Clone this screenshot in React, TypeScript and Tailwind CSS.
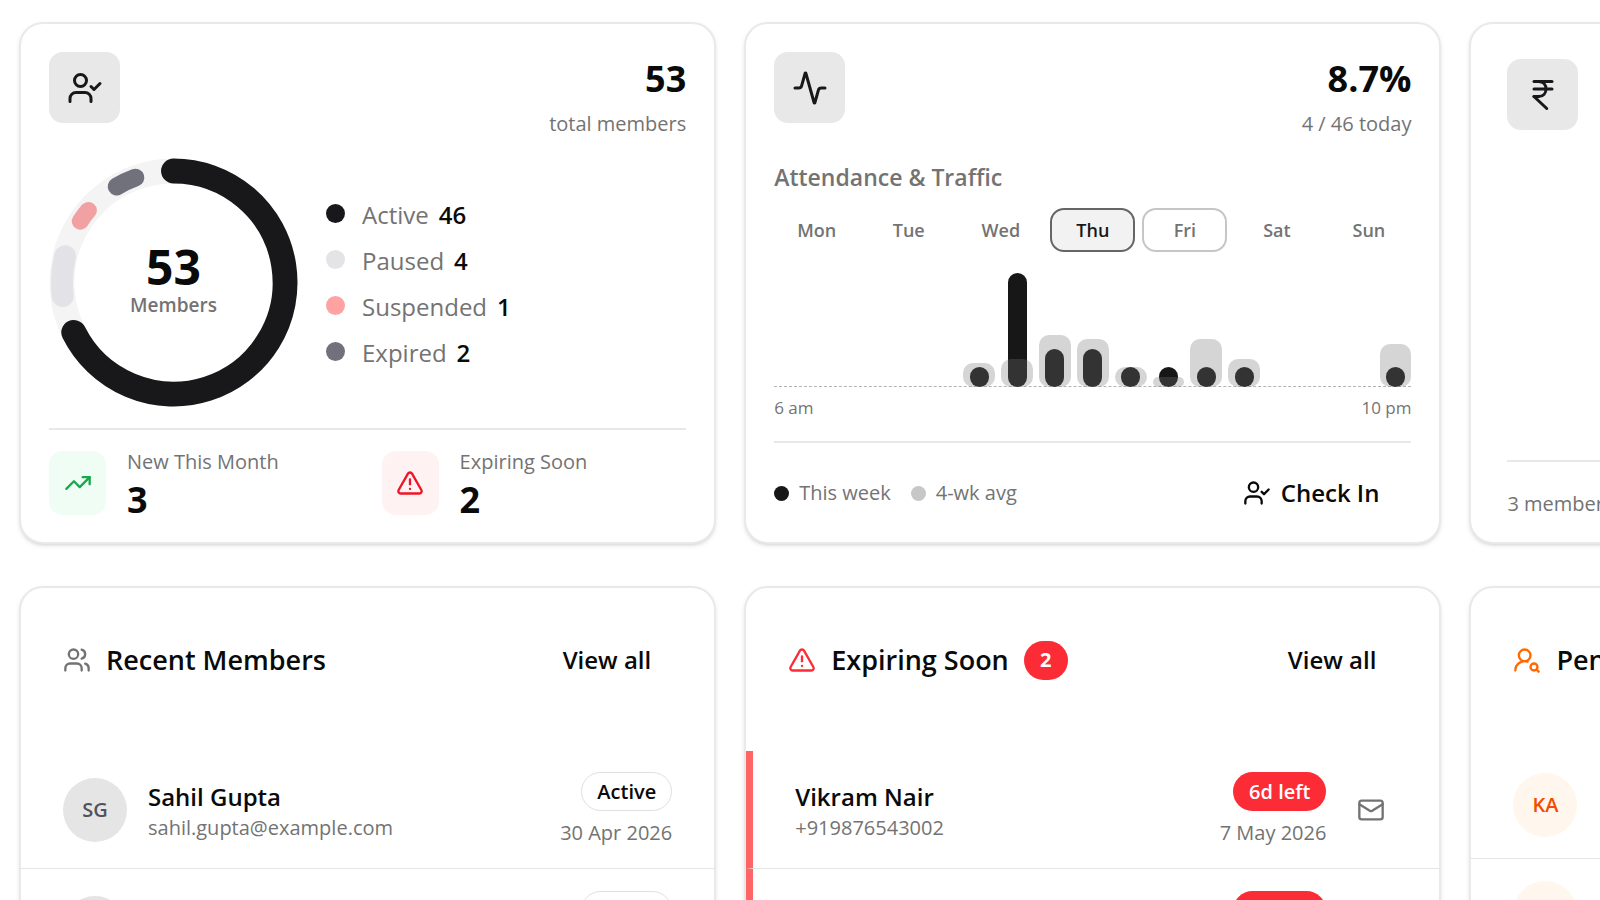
import React, { useState } from "react";
import {
  Activity,
  IndianRupee,
  Mail,
  TrendingUp,
  TriangleAlert,
  UserCheck,
  UserRoundSearch,
  Users,
} from "lucide-react";

const days = ["Mon", "Tue", "Wed", "Thu", "Fri", "Sat", "Sun"];

// one entry per hour, 6 am to 10 pm, heights as a share of the busiest hour
const hours = [
  { now: 0, avg: 0 },
  { now: 0, avg: 0 },
  { now: 0, avg: 0 },
  { now: 0, avg: 0 },
  { now: 0, avg: 0 },
  { now: 17.5, avg: 21 },
  { now: 100, avg: 25 },
  { now: 33, avg: 46 },
  { now: 33, avg: 42 },
  { now: 17.5, avg: 17.5 },
  { now: 17.5, avg: 9 },
  { now: 17.5, avg: 42 },
  { now: 17.5, avg: 25 },
  { now: 0, avg: 0 },
  { now: 0, avg: 0 },
  { now: 0, avg: 0 },
  { now: 17.5, avg: 37.5 },
];

const statuses = [
  { label: "Active", count: 46, dot: "bg-[#18181b]" },
  { label: "Paused", count: 4, dot: "bg-[#e4e4e7]" },
  { label: "Suspended", count: 1, dot: "bg-[#ffa2a2]" },
  { label: "Expired", count: 2, dot: "bg-[#71717b]" },
];

const segments = [
  { from: 0, to: 243.4, width: 25, color: "#18181b" },
  { from: 263, to: 283.6, width: 22, color: "#e2e2e7" },
  { from: 303.3, to: 310.3, width: 17, color: "#f2a1a3" },
  { from: 329.4, to: 340, width: 18, color: "#71717b" },
];

function arc(from: number, to: number) {
  const r = 112;
  const point = (deg: number) => {
    const a = ((deg - 90) * Math.PI) / 180;
    return `${125 + r * Math.cos(a)} ${125 + r * Math.sin(a)}`;
  };
  return `M${point(from)} A${r} ${r} 0 ${to - from > 180 ? 1 : 0} 1 ${point(to)}`;
}

function Card({ className, children }: { className: string; children: React.ReactNode }) {
  return (
    <section
      className={`flex flex-col rounded-3xl border-2 border-[#e9e9e9] bg-white shadow-[0_2px_5px_rgba(0,0,0,0.08),0_2px_3px_-1px_rgba(0,0,0,0.1)] ${className}`}
    >
      {children}
    </section>
  );
}

function IconTile({ children }: { children: React.ReactNode }) {
  return (
    <div className="flex size-[71px] shrink-0 items-center justify-center rounded-[14px] bg-[#e8e8e8] text-[#18181b]">
      {children}
    </div>
  );
}

function StatHeader({ icon, value, note }: { icon: React.ReactNode; value: string; note: string }) {
  return (
    <div className="flex items-start justify-between">
      <IconTile>{icon}</IconTile>
      <div className="text-right">
        <p className="text-[36px] leading-[53px] font-bold">{value}</p>
        <p className="text-[20px] leading-[38px] text-[#737373]">{note}</p>
      </div>
    </div>
  );
}

function MembersCard() {
  return (
    <Card className="px-7 pt-7 pb-[15px]">
      <StatHeader icon={<UserCheck size={36} />} value="53" note="total members" />

      <div className="mt-[15px] flex items-center gap-7">
        <div className="grid size-[249px] shrink-0 place-items-center">
          <svg viewBox="0 0 250 250" className="col-start-1 row-start-1 size-full" fill="none">
            <circle cx="125" cy="125" r="112" stroke="#f4f4f4" strokeWidth="25" />
            {segments.map((s) => (
              <path
                key={s.from}
                d={arc(s.from, s.to)}
                stroke={s.color}
                strokeWidth={s.width}
                strokeLinecap="round"
              />
            ))}
          </svg>
          <div className="col-start-1 row-start-1 pb-2.5 text-center">
            <p className="text-[48px] leading-[54px] font-bold">53</p>
            <p className="text-[19px] leading-[22px] font-semibold text-[#737373]">Members</p>
          </div>
        </div>

        <ul>
          {statuses.map((s) => (
            <li key={s.label} className="flex h-[46px] items-center text-[24px]">
              <span className={`mr-[17px] size-[19px] rounded-full ${s.dot}`} />
              <span className="mr-2.5 pt-0.5 text-[#737373]">{s.label}</span>
              <span className="pt-0.5 font-semibold">{s.count}</span>
            </li>
          ))}
        </ul>
      </div>

      <div className="mt-[21px] grid grid-cols-2 gap-7 border-t-2 border-[#e8e8e8] pt-[21px]">
        <div className="flex items-start gap-[21px]">
          <div className="flex h-16 w-[57px] items-center justify-center rounded-[14px] bg-[#f0fdf4] text-[#16a94e]">
            <TrendingUp size={28} />
          </div>
          <div>
            <p className="text-[20px] leading-[22px] text-[#737373]">New This Month</p>
            <p className="text-[36px] leading-[54px] font-bold">3</p>
          </div>
        </div>
        <div className="flex items-start gap-[21px]">
          <div className="flex h-16 w-[57px] items-center justify-center rounded-[14px] bg-[#fef2f2] text-[#f01525]">
            <TriangleAlert size={28} />
          </div>
          <div>
            <p className="text-[20px] leading-[22px] text-[#737373]">Expiring Soon</p>
            <p className="text-[36px] leading-[54px] font-bold">2</p>
          </div>
        </div>
      </div>
    </Card>
  );
}

function AttendanceCard() {
  const [selected, setSelected] = useState("Thu");
  const today = "Fri";

  const dayStyle = (day: string) => {
    if (day === selected) return "border-[#66666a] bg-[#f2f2f2] text-[#18181b]";
    if (day === today) return "border-[#c6c6c6] text-[#737373]";
    return "border-transparent text-[#737373]";
  };

  return (
    <Card className="px-7 pt-7 pb-5">
      <StatHeader icon={<Activity size={36} />} value="8.7%" note="4 / 46 today" />

      <h2 className="mt-[18px] text-[23px] leading-8 font-semibold text-[#737373]">
        Attendance &amp; Traffic
      </h2>

      <div className="mt-[15px] grid grid-cols-7 gap-[7px]">
        {days.map((day) => (
          <button
            key={day}
            type="button"
            onClick={() => setSelected(day)}
            className={`h-11 rounded-[14px] border-2 text-[18px] font-semibold ${dayStyle(day)}`}
          >
            {day}
          </button>
        ))}
      </div>

      {/* bars sit on top of the dashed base line */}
      <div className="mt-[21px] grid h-[114px] grid-cols-17 gap-[6px] border-b border-dashed border-[#b4b4b4]">
        {hours.map((h, i) => (
          <div key={i} className="-mb-px grid items-end justify-items-center">
            <div
              className="col-start-1 row-start-1 w-[19px] rounded-full bg-[#171717]"
              style={{ height: `${h.now}%` }}
            />
            <div
              className="col-start-1 row-start-1 w-full rounded-[10px] bg-[#737373]/30"
              style={{ height: `${h.avg}%` }}
            />
          </div>
        ))}
      </div>
      <div className="mt-2 flex justify-between text-[17px] leading-[26px] text-[#737373]">
        <span>6 am</span>
        <span>10 pm</span>
      </div>

      <div className="mt-5 flex items-center border-t-2 border-[#e8e8e8] pt-[21px] text-[20px] text-[#737373]">
        <span className="mr-2.5 size-[15px] rounded-full bg-[#171717]" />
        <span className="mr-5">This week</span>
        <span className="mr-2.5 size-[15px] rounded-full bg-[#c7c7c7]" />
        <span>4-wk avg</span>
        <button
          type="button"
          className="ml-auto flex h-[58px] items-center gap-2.5 px-8 text-[24px] font-semibold text-[#0a0a0a]"
        >
          <UserCheck size={28} />
          Check In
        </button>
      </div>
    </Card>
  );
}

function RevenueCard() {
  return (
    <Card className="px-9 pt-[35px] pb-5">
      <IconTile>
        <IndianRupee size={36} />
      </IconTile>
      <p className="mt-auto border-t-2 border-[#e8e8e8] pt-6 text-[20px] leading-9 text-[#737373]">
        3 members
      </p>
    </Card>
  );
}

function ListHeader({
  icon,
  title,
  count,
}: {
  icon: React.ReactNode;
  title: string;
  count?: number;
}) {
  return (
    <div className="flex items-center px-[42px] pt-[43px] pb-[62px]">
      {icon}
      <h2 className="ml-[15px] text-[27px] leading-8 font-semibold">{title}</h2>
      {count && (
        <span className="ml-[15px] flex h-[39px] w-11 items-center justify-center rounded-full bg-[#fb2c36] text-[20px] font-bold text-white">
          {count}
        </span>
      )}
      <a href="#" className="ml-auto px-[21px] text-[24px] leading-[58px] font-semibold">
        View all
      </a>
    </div>
  );
}

function RecentMembers() {
  const members = [
    { initials: "SG", name: "Sahil Gupta", email: "sahil.gupta@example.com", date: "30 Apr 2026" },
    { initials: "", name: "", email: "", date: "" },
  ];
  return (
    <Card className="overflow-hidden">
      <ListHeader icon={<Users size={28} className="text-[#737373]" />} title="Recent Members" />
      <ul className="divide-y divide-[#e5e5e5]">
        {members.map((m, i) => (
          <li key={i} className="flex h-[118px] items-center px-[42px]">
            <div
              className={`flex size-16 items-center justify-center rounded-full text-[20px] font-semibold text-[#52525c] ${
                i === 0 ? "bg-[#e5e5e5]" : "bg-[#e4e4e7]"
              }`}
            >
              {m.initials}
            </div>
            <div className="ml-[21px] pt-0.5">
              <p className="text-[24px] leading-[34px] font-semibold">{m.name}</p>
              <p className="text-[20px] leading-7 text-[#737373]">{m.email}</p>
            </div>
            <div className="ml-auto flex flex-col items-end pt-1">
              <span className="flex h-[39px] items-center rounded-full border border-[#e0e0e0] px-[15px] text-[20px] font-semibold">
                Active
              </span>
              <span className="mt-1 h-9 text-[20px] leading-9 text-[#737373]">{m.date}</span>
            </div>
          </li>
        ))}
      </ul>
    </Card>
  );
}

function ExpiringSoon() {
  const members = [
    { name: "Vikram Nair", phone: "+919876543002", left: "6d left", date: "7 May 2026" },
    { name: "", phone: "", left: "6d left", date: "" },
  ];
  return (
    <Card className="overflow-hidden">
      <ListHeader
        icon={<TriangleAlert size={28} className="text-[#fb2c36]" />}
        title="Expiring Soon"
        count={2}
      />
      <ul className="divide-y divide-[#e5e5e5]">
        {members.map((m, i) => (
          <li
            key={i}
            className="flex h-[118px] items-center border-l-[7px] border-l-[#ff6467] px-[42px]"
          >
            <div className="pt-0.5">
              <p className="text-[24px] leading-[34px] font-semibold">{m.name}</p>
              <p className="text-[20px] leading-7 text-[#737373]">{m.phone}</p>
            </div>
            <div className="ml-auto flex flex-col items-end pt-1">
              <span className="flex h-[39px] items-center rounded-full bg-[#fb2c36] px-4 text-[20px] font-semibold text-white">
                {m.left}
              </span>
              <span className="mt-1 h-9 text-[20px] leading-9 text-[#737373]">{m.date}</span>
            </div>
            <button
              type="button"
              aria-label="Send email"
              className="ml-[18px] flex size-[53px] items-center justify-center text-[#737373]"
            >
              <Mail size={28} />
            </button>
          </li>
        ))}
      </ul>
    </Card>
  );
}

function PendingCard() {
  return (
    <Card className="overflow-hidden">
      <ListHeader icon={<UserRoundSearch size={28} className="text-[#ff6900]" />} title="Pending" />
      <ul className="divide-y divide-[#e5e5e5]">
        {["KA", ""].map((initials) => (
          <li key={initials} className="flex h-[108px] items-center px-[42px]">
            <div className="flex size-16 items-center justify-center rounded-full bg-[#fff7ed] text-[20px] font-semibold text-[#f54a00]">
              {initials}
            </div>
          </li>
        ))}
      </ul>
    </Card>
  );
}

export default function App() {
  return (
    <main className="h-screen overflow-hidden bg-white font-['Open_Sans',sans-serif] text-[#0a0a0a]">
      <div className="grid grid-cols-[repeat(3,44.1%)] gap-x-7 gap-y-[42px] pt-[22px] pl-[19px]">
        <MembersCard />
        <AttendanceCard />
        <RevenueCard />
        <RecentMembers />
        <ExpiringSoon />
        <PendingCard />
      </div>
    </main>
  );
}
